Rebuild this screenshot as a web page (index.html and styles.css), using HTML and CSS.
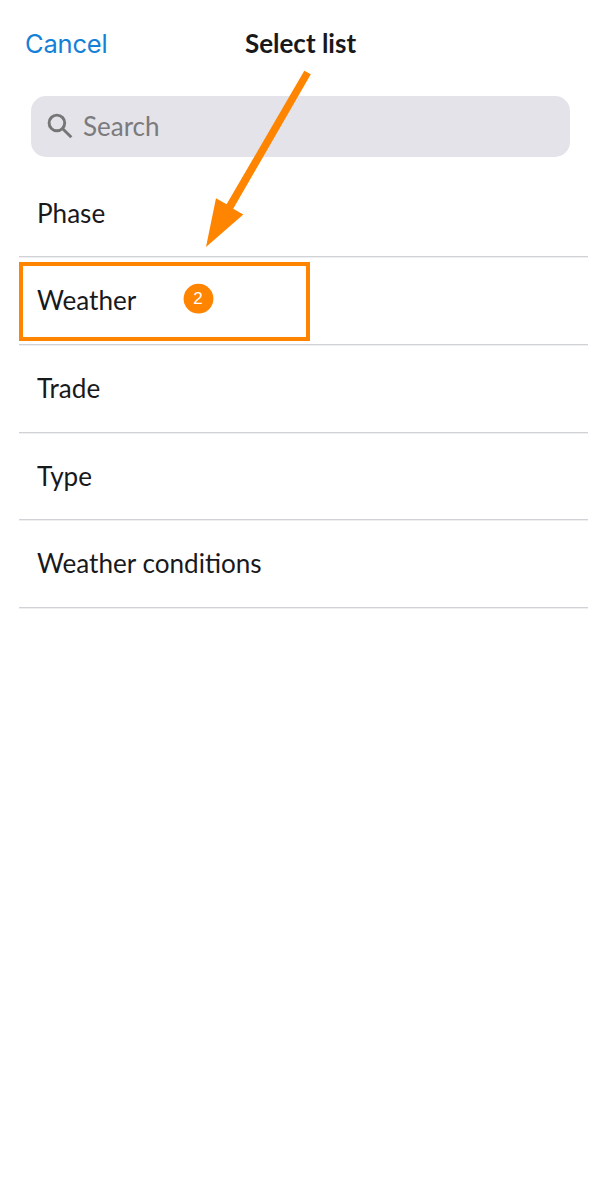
FILE: index.html
```html
<!DOCTYPE html>
<html lang="en">
<head>
<meta charset="utf-8">
<title>Select list</title>
<link rel="stylesheet" href="styles.css">
</head>
<body>
<main class="screen">
  <header class="header">
    <a class="cancel">Cancel</a>
    <h1 class="title">Select list</h1>
  </header>
  <div class="search">
    <svg class="search-icon" viewBox="0 0 26 26"><circle cx="9.9" cy="9.9" r="7.8"/><path d="M15.2 15.2L24.3 24.3"/></svg>
    <span>Search</span>
  </div>
  <ul class="list">
    <li class="item">Phase</li>
    <li class="item">Weather</li>
    <li class="item">Trade</li>
    <li class="item">Type</li>
    <li class="item">Weather conditions</li>
  </ul>
  <div class="highlight"></div>
  <svg class="step" viewBox="0 0 32 32"><circle cx="15.5" cy="15.7" r="14.9"/><text x="15" y="21">2</text></svg>
  <svg class="arrow" viewBox="0 0 600 300"><path d="M304.3 70.8L310.8 74.2L233.2 208.8L243.3 214.4L206 247L216 198.2L226.6 204.2Z"/></svg>
</main>
</body>
</html>
```

FILE: styles.css
```css
body {
  margin: 0;
  background: #fff;
  color: #19191b;
  font-family: Lato, sans-serif;
}
.screen {
  position: relative;
  height: 1194px;
  overflow: hidden;
}
.header {
  display: grid;
  grid-template-columns: 1fr auto 1fr;
  align-items: center;
  height: 86px;
  padding: 0 24px 0 25px;
}
.cancel {
  padding-top: 1px;
  color: #1580d8;
  font: 25.5px/32px Inter, sans-serif;
  letter-spacing: -0.2px;
}
.title {
  margin: 0;
  font-size: 26px;
  line-height: 32px;
  font-weight: 700;
}
.search {
  display: flex;
  align-items: center;
  gap: 10px;
  box-sizing: border-box;
  height: 61px;
  margin: 10px 30.5px 0 31px;
  padding: 0 0 1px 16px;
  border-radius: 15px;
  background: #e4e3e9;
  color: #7b7a7c;
  font-size: 26px;
}
.search-icon {
  width: 26px;
  height: 26px;
  fill: none;
  stroke: #767676;
  stroke-width: 2.9;
}
.list {
  margin: 12.5px 12px 0 19px;
  padding: 0;
  list-style: none;
}
.item {
  box-sizing: border-box;
  height: 87.7px;
  padding-left: 18px;
  border-bottom: 1px solid #d0d2d6;
  box-shadow: 0 1px 0 #eeeff1;
  font-size: 26.1px;
  line-height: 87.8px;
}
.highlight {
  position: absolute;
  left: 19px;
  top: 262px;
  width: 283px;
  height: 71px;
  border: 4px solid #ff8400;
}
.step {
  position: absolute;
  left: 183px;
  top: 283px;
  width: 32px;
  height: 32px;
  fill: #ff8400;
}
.step text {
  fill: #fff;
  font: 17px "Liberation Sans", sans-serif;
  text-anchor: middle;
}
.arrow {
  position: absolute;
  left: 0;
  top: 0;
  width: 600px;
  height: 300px;
  fill: #ff8400;
}
```
